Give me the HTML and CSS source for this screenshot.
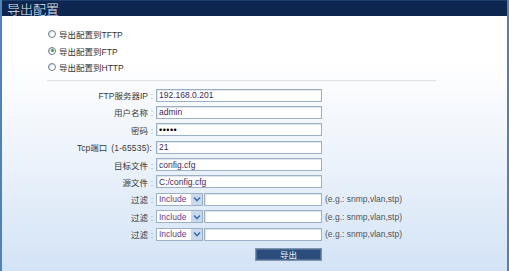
FILE: index.html
```html
<!DOCTYPE html>
<html>
<head>
<meta charset="utf-8">
<link rel="stylesheet" href="styles.css">
</head>
<body>
<div class="page">
  <div class="titlebar">导出配置</div>
  <div class="radios">
    <label class="radio"><span class="dot"></span><span>导出配置到TFTP</span></label>
    <label class="radio"><span class="dot checked"></span><span>导出配置到FTP</span></label>
    <label class="radio"><span class="dot"></span><span>导出配置到HTTP</span></label>
  </div>
  <div class="sep"></div>
  <div class="form">
    <div class="lbl">FTP服务器IP<span class="colon">:</span></div>
    <input class="field" type="text" value="192.168.0.201">
    <div></div>

    <div class="lbl">用户名称<span class="colon">:</span></div>
    <input class="field" type="text" value="admin">
    <div></div>

    <div class="lbl">密码<span class="colon">:</span></div>
    <input class="field pw" type="password" value="12345">
    <div></div>

    <div class="lbl tcp">Tcp端口<span class="range">(1-65535):</span></div>
    <input class="field" type="text" value="21">
    <div></div>

    <div class="lbl">目标文件<span class="colon">:</span></div>
    <input class="field" type="text" value="config.cfg">
    <div></div>

    <div class="lbl">源文件<span class="colon">:</span></div>
    <input class="field" type="text" value="C:/config.cfg">
    <div></div>

    <div class="lbl">过滤<span class="colon">:</span></div>
    <div class="filter">
      <span class="sel"><select><option>Include</option><option>Exclude</option></select><span class="arrow"><svg width="8" height="6" viewBox="0 0 8 6"><path d="M1 1.5 L4 4.5 L7 1.5" fill="none" stroke="#3d6fb6" stroke-width="1.6"/></svg></span></span>
      <input class="field grow" type="text" value="">
    </div>
    <div class="hint">(e.g.: snmp,vlan,stp)</div>

    <div class="lbl">过滤<span class="colon">:</span></div>
    <div class="filter">
      <span class="sel"><select><option>Include</option><option>Exclude</option></select><span class="arrow"><svg width="8" height="6" viewBox="0 0 8 6"><path d="M1 1.5 L4 4.5 L7 1.5" fill="none" stroke="#3d6fb6" stroke-width="1.6"/></svg></span></span>
      <input class="field grow" type="text" value="">
    </div>
    <div class="hint">(e.g.: snmp,vlan,stp)</div>

    <div class="lbl">过滤<span class="colon">:</span></div>
    <div class="filter">
      <span class="sel"><select><option>Include</option><option>Exclude</option></select><span class="arrow"><svg width="8" height="6" viewBox="0 0 8 6"><path d="M1 1.5 L4 4.5 L7 1.5" fill="none" stroke="#3d6fb6" stroke-width="1.6"/></svg></span></span>
      <input class="field grow" type="text" value="">
    </div>
    <div class="hint">(e.g.: snmp,vlan,stp)</div>

    <div></div>
    <div class="btnrow"><button class="btn" type="button">导出</button></div>
    <div></div>
  </div>
</div>
</body>
</html>
```
FILE: styles.css
```css
html, body {
  margin: 0;
  padding: 0;
}
body {
  font-family: "Liberation Sans", "Noto Sans CJK SC", sans-serif;
  font-size: 8.5px;
  color: #333;
}
.page {
  width: 509px;
  height: 271px;
  box-sizing: border-box;
  border-left: 2px solid #4f82b6;
  border-right: 2px solid #4f82b6;
  background: linear-gradient(to bottom, #ffffff 0px, #ffffff 60px, #eef4fb 150px, #d3e3f6 271px);
  overflow: hidden;
}
.titlebar {
  height: 16px;
  line-height: 15px;
  background: #0c2650;
  border-top: 1px solid #1d3f6e;
  box-sizing: border-box;
  color: #e6ecf3;
  font-family: "Noto Sans CJK SC", sans-serif;
  font-size: 13px;
  font-weight: 300;
  padding-left: 5px;
}
.radios {
  display: flex;
  flex-direction: column;
  padding-top: 10px;
  margin-left: 46px;
}
.radio {
  height: 16.5px;
  display: flex;
  align-items: center;
  gap: 3px;
  color: #333;
}
.dot {
  width: 6px;
  height: 6px;
  border: 1px solid #6f7f90;
  border-radius: 50%;
  background: #fff;
  position: relative;
  box-shadow: inset 1px 1px 1px #d0d8e0;
}
.dot.checked::after {
  content: "";
  position: absolute;
  left: 1.5px;
  top: 1.5px;
  width: 3px;
  height: 3px;
  border-radius: 50%;
  background: #34a03a;
}
.sep {
  margin: 4px 0 0 45px;
  width: 389px;
  height: 1px;
  background: #dfe4e9;
  border-bottom: 1px solid #f4f6f8;
}
.form {
  margin-top: 7px;
  display: grid;
  grid-template-columns: 154px 166px auto;
  grid-auto-rows: 13px;
  row-gap: 4.4px;
  align-items: center;
}
.lbl {
  text-align: right;
  white-space: nowrap;
  color: #3a3a3a;
}
.colon {
  display: inline-block;
  width: 8px;
  text-align: center;
  color: #8a9cae;
}
.range {
  margin-left: 4px;
  margin-right: 4px;
  letter-spacing: 0.15px;
}
.field {
  box-sizing: border-box;
  height: 13px;
  width: 166px;
  margin: 0;
  padding: 0 2px;
  border: 1px solid #9cb1c7;
  box-shadow: inset 1px 1px 0 #dde6ef;
  background: #fff;
  font-family: "Liberation Sans", sans-serif;
  font-size: 8.5px;
  color: #3d2a5c;
  outline: none;
}
.pw {
  font-size: 9px;
  letter-spacing: 0.5px;
  color: #000;
}
.filter {
  display: flex;
  height: 13px;
  gap: 1px;
}
.field.grow {
  width: auto;
  flex: 1;
  min-width: 0;
}
.sel {
  position: relative;
  display: block;
  width: 47px;
  height: 13px;
  box-sizing: border-box;
  border: 1px solid #9cb1c7;
  background: #fff;
}
.sel select {
  appearance: none;
  -webkit-appearance: none;
  border: none;
  background: transparent;
  width: 100%;
  height: 11px;
  margin: 0;
  padding: 0 0 0 2px;
  font-family: "Liberation Sans", sans-serif;
  font-size: 8.5px;
  color: #6b3b88;
  outline: none;
  display: block;
}
.arrow {
  position: absolute;
  right: 0;
  top: 0;
  width: 11px;
  height: 11px;
  background: #c9d8eb;
  display: flex;
  align-items: center;
  justify-content: center;
  pointer-events: none;
}
.hint {
  padding-left: 3px;
  color: #555;
  white-space: nowrap;
}
.btnrow {
  display: flex;
  justify-content: flex-end;
  align-self: end;
  margin-bottom: -3px;
}
.btn {
  width: 67px;
  height: 13px;
  margin: 0;
  padding: 0;
  box-sizing: border-box;
  border: 1px solid #7f93aa;
  box-shadow: inset 0 0 0 1px #4d6d96;
  background: #2b4d7c;
  color: #e8eef6;
  font-family: "Noto Sans CJK SC", sans-serif;
  font-size: 8.5px;
  line-height: 11px;
}
```
